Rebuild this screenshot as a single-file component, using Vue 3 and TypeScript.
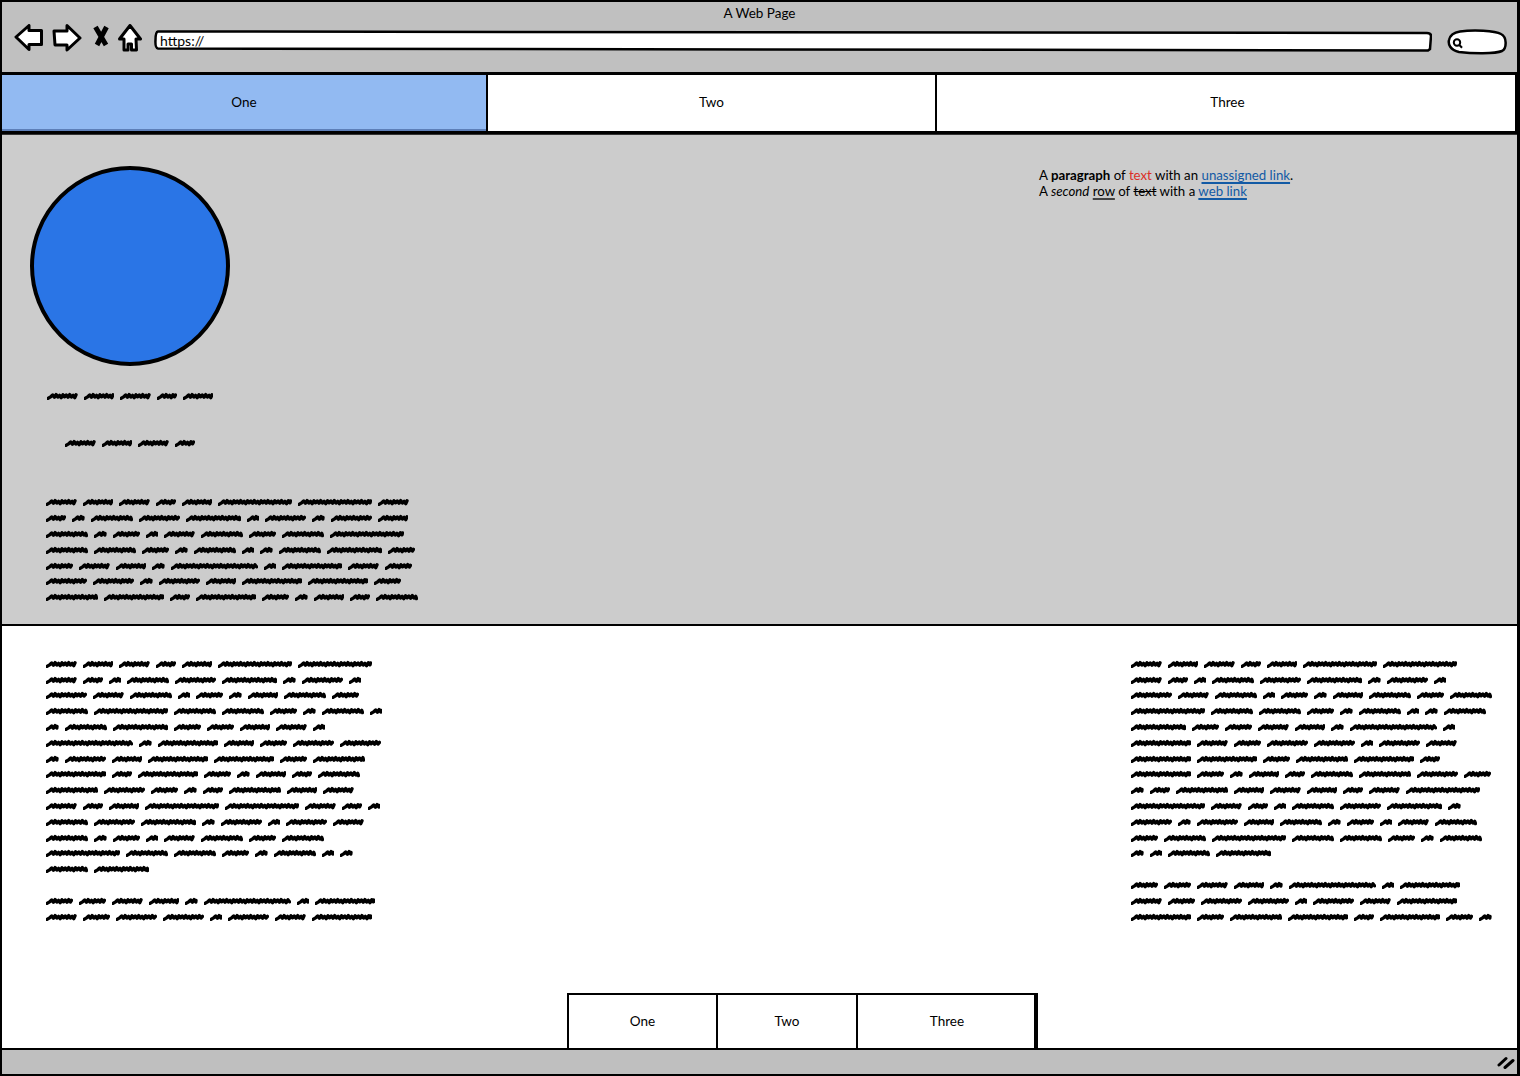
<script setup lang="ts">
// Sketch-style wireframe of a browser window. Body copy is shown as scribbles,
// one small svg per word, with lines kept explicit so they wrap like the mockup.

const WORD_W: Record<string, number> = {
  a: 30.5, s: 20, t: 12.5, h: 27, F: 41, E: 42, L: 52, G: 55, K: 60, C: 74, I: 74, J: 87,
};

// deterministic zigzag, no randomness so every render is the same
const scribble = (w: number): string => {
  const end = w - 1.5;
  let d = 'M1 6.4 L4 4.6';
  let x = 4;
  let i = 0;
  const ys = [3, 5.2, 2.6, 5, 3.4, 5.6, 2.8, 4.8];
  while (x < end) {
    x = Math.min(x + 1.7, end);
    d += ` L${x.toFixed(1)} ${ys[i % ys.length]}`;
    i++;
  }
  return d;
};

type Word = { w: number; d: string };
const toWords = (line: string): Word[] =>
  line.split(' ').map((k) => ({ w: WORD_W[k], d: scribble(WORD_W[k]) }));
const toLines = (lines: string[]) => lines.map(toWords);

const heroTitle = toLines(['a a a s a']);
const heroSub = toLines(['a a a s']);
const heroPara = toLines([
  'a a a s a C C a',
  's t E F G t F t F a',
  'E t h t a E h E I',
  'E E h t E t t E G h',
  'h a a t J t K a h',
  'F F t F a K K h',
  'L K s K h t a s E',
]);

const leftCol = [
  toLines([
    'a a a s a C C',
    'a s t E F G t F t',
    'F a E t h t a E h',
    'E I E E h t E t',
    't E G h h a a t',
    'J t K a h F F',
    't F a K K h L',
    'K s K h t a s E',
    'L F h t s L a a',
    'a s a C C a s t',
    'E F G t F t F a',
    'E t h t a E h E',
    'I E E h t E t t',
    'E G',
  ]),
  toLines(['h h a a t J t K', 'a h F F t F a K']),
];

const rightCol = [
  toLines([
    'a a a s a C C',
    'a s t E F G t F t',
    'F a E t h t a E h E',
    'I E E h t E t t E',
    'G h h a a t J t',
    'K a h F F t F a',
    'K K h L K s',
    'K h t a s E L F h',
    't s L a a a s a C',
    'C a s t E F G t',
    'F t F a E t h t a E',
    'h E I E E h t E',
    't t E G',
  ]),
  toLines(['h h a a t J t K', 'a h F F t F a K', 'K h L K s K h t']),
];

const tabs = ['One', 'Two', 'Three'];
</script>

<template>
  <div class="window">
    <header class="chrome">
      <div class="title">A Web Page</div>
      <div class="toolbar">
        <svg class="icon back" width="30" height="28" viewBox="0 0 30 28">
          <path d="M2 13 L15 1.5 V6.5 H27.5 V20.5 H15 V25.5 Z" />
        </svg>
        <svg class="icon fwd" width="30" height="28" viewBox="0 0 30 28">
          <path d="M2 7 H15 V1.5 L28 14 L15 26 V21 H3 Z" />
        </svg>
        <svg class="x" width="18" height="22" viewBox="0 0 18 22">
          <path d="M3.5 2 L14 20 M14.5 2 L5 20" />
        </svg>
        <svg class="icon home" width="24" height="28" viewBox="0 0 24 28">
          <path d="M12 1.5 L22.5 15 H18 L18.5 26 H13.5 V20 H10 V26 H6 V15 H1.5 Z" />
        </svg>
        <div class="url">
          <svg class="url-box" viewBox="0 0 1278 22" preserveAspectRatio="none">
            <path d="M4 1.5 L1273 3 Q1277 3 1277 6 L1276 19 L1274 20.5 L4 18.5 Q1 18 1.5 10 Q1.5 2 4 1.5 Z" />
          </svg>
          <span class="url-text">https://</span>
        </div>
        <svg class="search" width="62" height="26" viewBox="0 0 62 26">
          <path class="search-box" d="M13 2.5 C26 0.5 48 1.5 54 5 C60 8 60 19 55 22 C48 25 25 24.5 12 23 C3 21 1 15 2 11 C3 6 7 3.5 13 2.5 Z" />
          <circle class="lens" cx="10" cy="13.5" r="3.2" />
          <path class="lens" d="M12.4 16 L15 18.8" />
        </svg>
      </div>
    </header>

    <nav class="tabs">
      <div v-for="(t, i) in tabs" :key="t" class="tab" :class="[`tab-${i}`, { active: i === 0 }]">{{ t }}</div>
    </nav>

    <section class="hero">
      <div class="hero-left">
        <div class="avatar-block">
          <div class="avatar"></div>
          <div class="hero-title">
            <div v-for="(line, i) in heroTitle" :key="i" class="line">
              <svg v-for="(wd, j) in line" :key="j" class="word" :width="wd.w" height="8"><path :d="wd.d" /></svg>
            </div>
          </div>
          <div class="hero-sub">
            <div v-for="(line, i) in heroSub" :key="i" class="line">
              <svg v-for="(wd, j) in line" :key="j" class="word" :width="wd.w" height="8"><path :d="wd.d" /></svg>
            </div>
          </div>
        </div>
        <div class="hero-para">
          <div v-for="(line, i) in heroPara" :key="i" class="line">
            <svg v-for="(wd, j) in line" :key="j" class="word" :width="wd.w" height="8"><path :d="wd.d" /></svg>
          </div>
        </div>
      </div>
      <p class="note">
        A <b>paragraph</b> of <span class="red">text</span> with an <a class="link">unassigned link</a>.<br />
        A <i>second</i> <u>row</u> of <s>text</s> with a <a class="link">web link</a>
      </p>
    </section>

    <main class="content">
      <div class="columns">
        <div class="col col-left">
          <div v-for="(para, p) in leftCol" :key="p" class="para">
            <div v-for="(line, i) in para" :key="i" class="line">
              <svg v-for="(wd, j) in line" :key="j" class="word" :width="wd.w" height="8"><path :d="wd.d" /></svg>
            </div>
          </div>
        </div>
        <div class="col col-right">
          <div v-for="(para, p) in rightCol" :key="p" class="para">
            <div v-for="(line, i) in para" :key="i" class="line">
              <svg v-for="(wd, j) in line" :key="j" class="word" :width="wd.w" height="8"><path :d="wd.d" /></svg>
            </div>
          </div>
        </div>
      </div>
      <div class="sub-tabs">
        <div v-for="(t, i) in tabs" :key="t" class="sub-tab" :class="`sub-tab-${i}`">{{ t }}</div>
      </div>
    </main>

    <footer class="status">
      <svg class="grip" width="18" height="14" viewBox="0 0 18 14">
        <path d="M2 10 L9 3.5 M8 12.5 L16 5.5" />
      </svg>
    </footer>
  </div>
</template>

<style scoped>
.window {
  width: 1520px;
  height: 1076px;
  box-sizing: border-box;
  border: 2px solid #000;
  border-right-width: 3px;
  display: flex;
  flex-direction: column;
  background: #fff;
  color: #000;
  font-family: Lato, "Open Sans", sans-serif;
  font-size: 13.5px;
  overflow: hidden;
}

.chrome {
  height: 70px;
  flex: none;
  background: #c0c0c0;
  border-bottom: 3px solid #000;
}
.title {
  text-align: center;
  line-height: 14px;
  padding-top: 4px;
  height: 15px;
}
.toolbar {
  display: flex;
  align-items: center;
  height: 28px;
  margin-top: 3px;
  padding-left: 12px;
}
.icon path {
  fill: #fff;
  stroke: #000;
  stroke-width: 3;
  stroke-linejoin: round;
}
.fwd { margin-left: 8px; }
.x {
  margin-left: 10px;
  margin-bottom: 4px;
}
.x path {
  fill: none;
  stroke: #000;
  stroke-width: 5;
}
.home { margin-left: 8px; }

.url {
  position: relative;
  width: 1278px;
  height: 22px;
  margin: 6px 0 0 12px;
  display: flex;
  align-items: center;
}
.url-box {
  position: absolute;
  inset: 0;
  width: 100%;
  height: 100%;
}
.url-box path {
  fill: #fff;
  stroke: #000;
  stroke-width: 2.5;
  vector-effect: non-scaling-stroke;
}
.url-text {
  position: relative;
  margin: 0 0 2px 6px;
  font-size: 14px;
}
.search { margin: 8px 0 0 15px; }
.search-box {
  fill: #fff;
  stroke: #000;
  stroke-width: 2.5;
}
.lens {
  fill: none;
  stroke: #000;
  stroke-width: 2;
}

.tabs {
  display: flex;
  height: 59px;
  flex: none;
  border-bottom: 3px solid #000;
  box-sizing: border-box;
  margin-right: -1px;
}
.tab {
  display: flex;
  align-items: center;
  justify-content: center;
  background: #fff;
  box-sizing: border-box;
  padding-bottom: 2px;
}
.tab-0 { width: 484px; }
.tab-1 { width: 449px; border-left: 2px solid #000; }
.tab-2 { flex: 1; border-left: 2px solid #000; border-right: 3px solid #000; padding-left: 3px; }
.tab.active {
  background: #92baf2;
  box-shadow: inset 0 -2px 0 #5d7fb8;
}

.hero {
  height: 492px;
  flex: none;
  box-sizing: border-box;
  background: #ccc;
  border-top: 1px solid #333;
  border-bottom: 2px solid #000;
  display: flex;
}
.hero-left {
  width: 420px;
  box-sizing: border-box;
  padding-left: 28px;
}
.avatar-block {
  width: 200px;
  padding-top: 31px;
  display: flex;
  flex-direction: column;
  align-items: center;
}
.avatar {
  width: 200px;
  height: 200px;
  box-sizing: border-box;
  border: 4px solid #000;
  border-radius: 50%;
  background: #2a75e6;
}
.hero-title { margin-top: 22px; }
.hero-sub { margin-top: 31px; }
.hero-para { margin: 44px 0 0 16px; }
.note {
  margin: 32px 0 0 617px;
  font-size: 13.25px;
  line-height: 16px;
  white-space: nowrap;
}
.red { color: #dc2e26; }
.link {
  color: #125aa5;
  text-decoration: underline;
  text-underline-offset: 2px;
  text-decoration-thickness: 1.5px;
}
u { text-decoration-color: #444; text-underline-offset: 2px; text-decoration-thickness: 1.5px; }

.content {
  flex: 1;
  display: flex;
  flex-direction: column;
  min-height: 0;
}
.columns {
  display: flex;
  justify-content: space-between;
  padding: 30px 24px 0 44px;
}
.col-left { width: 340px; }
.col-right { width: 362px; }
.para + .para { margin-top: 16px; }

.line {
  display: flex;
  gap: 6px;
  height: 15.8px;
  align-items: center;
}
.word { flex: none; }
.word path {
  fill: none;
  stroke: #000;
  stroke-width: 3.4;
  stroke-linejoin: round;
  stroke-linecap: round;
}

.sub-tabs {
  display: flex;
  margin: auto 0 0 565px;
  width: 471px;
  height: 55px;
  box-sizing: border-box;
  border: 2px solid #000;
  border-bottom: none;
  border-right-width: 4px;
  background: #fff;
}
.sub-tab {
  display: flex;
  align-items: center;
  justify-content: center;
  box-sizing: border-box;
  padding-bottom: 2px;
}
.sub-tab-0 { width: 147px; }
.sub-tab-1 { width: 140px; border-left: 2px solid #000; }
.sub-tab-2 { flex: 1; border-left: 2px solid #000; padding-left: 2px; }

.status {
  height: 26px;
  flex: none;
  box-sizing: border-box;
  background: #bfbfbf;
  border-top: 2px solid #000;
  display: flex;
  justify-content: flex-end;
  align-items: center;
  padding-right: 2px;
}
.grip path {
  fill: none;
  stroke: #000;
  stroke-width: 3;
  stroke-linecap: round;
}
</style>

<style>
html, body { margin: 0; background: #fff; }
</style>
